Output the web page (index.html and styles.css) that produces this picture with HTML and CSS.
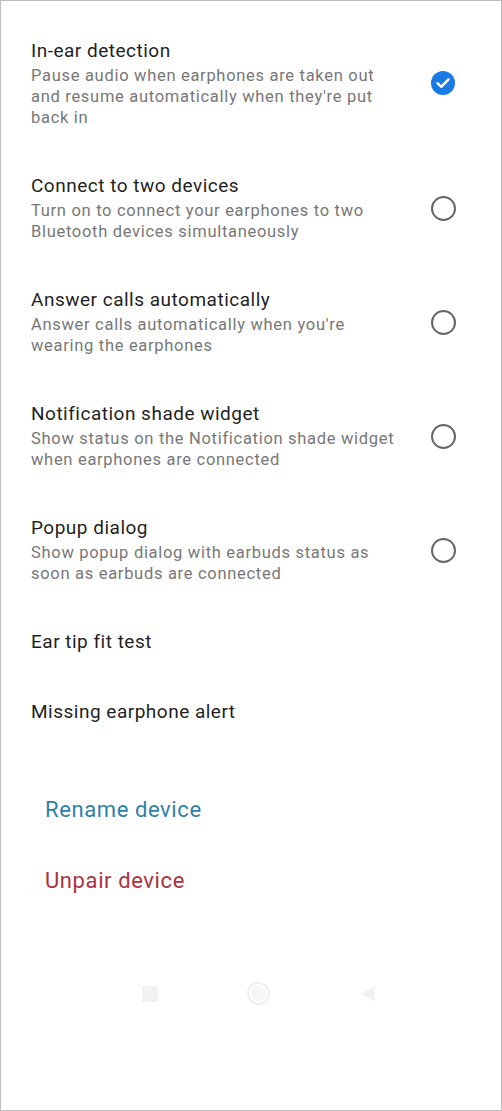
FILE: index.html
```html
<!DOCTYPE html>
<html lang="en">
<head>
    <meta charset="UTF-8">
    <meta name="viewport" content="width=device-width, initial-scale=1.0">
    <title>Earphone Settings</title>
    <link rel="stylesheet" href="styles.css">
</head>
<body>

    <div class="screen">
        <ul class="settings">
            <li class="item">
                <div class="text">
                    <div class="title">In-ear detection</div>
                    <div class="desc">Pause audio when earphones are taken out and resume automatically when they're put back in</div>
                </div>
                <span class="check on">
                    <svg width="24" height="24" viewBox="0 0 24 24">
                        <circle cx="12" cy="12" r="12" fill="#1a7ae6"/>
                        <path d="M6.5 12.2l3.8 3.6 7.2-7.4" fill="none" stroke="#fff" stroke-width="2.4" stroke-linecap="round" stroke-linejoin="round"/>
                    </svg>
                </span>
            </li>
            <li class="item">
                <div class="text">
                    <div class="title">Connect to two devices</div>
                    <div class="desc">Turn on to connect your earphones to two Bluetooth devices simultaneously</div>
                </div>
                <span class="check"></span>
            </li>
            <li class="item">
                <div class="text">
                    <div class="title">Answer calls automatically</div>
                    <div class="desc">Answer calls automatically when you're wearing the earphones</div>
                </div>
                <span class="check"></span>
            </li>
            <li class="item">
                <div class="text">
                    <div class="title">Notification shade widget</div>
                    <div class="desc">Show status on the Notification shade widget when earphones are connected</div>
                </div>
                <span class="check"></span>
            </li>
            <li class="item">
                <div class="text">
                    <div class="title">Popup dialog</div>
                    <div class="desc">Show popup dialog with earbuds status as soon as earbuds are connected</div>
                </div>
                <span class="check"></span>
            </li>
            <li class="item">
                <div class="text">
                    <div class="title">Ear tip fit test</div>
                </div>
            </li>
            <li class="item">
                <div class="text">
                    <div class="title">Missing earphone alert</div>
                </div>
            </li>
        </ul>

        <div class="actions">
            <div class="action rename">Rename device</div>
            <div class="action unpair">Unpair device</div>
        </div>

        <div class="navbar">
            <span class="nav-square"></span>
            <span class="nav-home"></span>
            <svg class="nav-back" width="18" height="18" viewBox="0 0 18 18">
                <path d="M16 1.5v15L1.5 9z" fill="#f1f1f1"/>
            </svg>
        </div>
    </div>

</body>
</html>
```

FILE: styles.css
```css
* {
    box-sizing: border-box;
}
body {
    margin: 0;
    background-color: #ffffff;
    font-family: Roboto, "Noto Sans", Arial, sans-serif;
}
.screen {
    width: 502px;
    height: 1111px;
    border: 1px solid #bdbdbd;
    display: flex;
    flex-direction: column;
}
.settings {
    list-style: none;
    margin: 0;
    padding: 16px 0 0 30px;
}
.item {
    display: flex;
    align-items: center;
    padding: 22px 0 24px 0;
}
.text {
    flex: 1;
    padding-right: 31px;
}
.title {
    font-size: 19px;
    line-height: 24px;
    letter-spacing: 0.5px;
    color: #1f1f1f;
}
.desc {
    margin-top: 2px;
    font-size: 16.5px;
    line-height: 21px;
    letter-spacing: 0.7px;
    color: #777777;
}
.check {
    flex: none;
    width: 25px;
    height: 25px;
    margin-right: 45px;
    border: 2px solid #666666;
    border-radius: 50%;
}
.check.on {
    border: none;
    display: flex;
}
.actions {
    padding: 47px 0 0 44px;
}
.action {
    font-size: 22px;
    line-height: 30px;
    letter-spacing: 0.6px;
    padding-bottom: 41px;
}
.rename {
    color: #2f80aa;
}
.unpair {
    color: #ad323a;
}
.navbar {
    display: flex;
    align-items: center;
    gap: 89px;
    margin-top: 45px;
    padding-left: 141px;
}
.nav-square {
    width: 16px;
    height: 16px;
    background-color: #f2f2f2;
}
.nav-home {
    width: 23px;
    height: 23px;
    border: 2px solid #eeeeee;
    border-radius: 50%;
    box-shadow: inset 0 0 0 2px #ffffff, inset 0 0 0 12px #f6f6f6;
}
```
